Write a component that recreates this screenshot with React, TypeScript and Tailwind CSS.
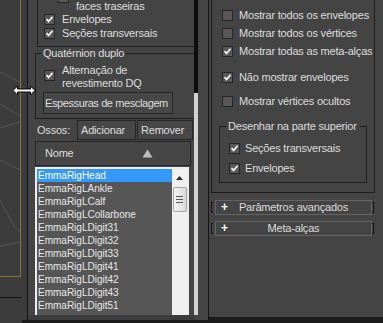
import React from "react";

const Check = ({ on }: { on?: boolean }) => (
  <span className="w-[11px] h-[11px] shrink-0 border border-[#262626] bg-[#585858] flex items-center justify-center">
    {on && (
      <svg width="9" height="9" viewBox="0 0 9 9">
        <path d="M1.5 4.2 L3.6 6.4 L7.6 1.8" stroke="#f4f4f4" strokeWidth="1.7" fill="none" />
      </svg>
    )}
  </span>
);

const bones = [
  "EmmaRigHead",
  "EmmaRigLAnkle",
  "EmmaRigLCalf",
  "EmmaRigLCollarbone",
  "EmmaRigLDigit31",
  "EmmaRigLDigit32",
  "EmmaRigLDigit33",
  "EmmaRigLDigit41",
  "EmmaRigLDigit42",
  "EmmaRigLDigit43",
  "EmmaRigLDigit51",
];

const Rollout = ({ label }: { label: string }) => (
  <div className="flex items-center ml-[2px] h-[15px]">
    <span className="w-[2px] h-[11px] border-l border-t border-b border-[#161616]" />
    <div className="ml-[2px] w-[157px] h-[15px] border border-[#646464] flex items-center">
      <span className="w-[14px] pl-[5px] text-white font-bold text-[12px] leading-[13px]">+</span>
      <span className="flex-1 text-center leading-[13px]">{label}</span>
      <span className="w-[14px]" />
    </div>
    <span className="w-[2px] h-[11px] border-r border-t border-b border-[#161616]" />
  </div>
);

export default function App() {
  return (
    <div className="w-[383px] h-[323px] overflow-hidden flex bg-[#1b1b1b] relative font-['Liberation_Sans',Arial,sans-serif] text-[11px] tracking-[-0.2px] text-[#dedede]">
      {/* viewport edge */}
      <div className="w-[22px] h-full bg-[#3c3c3c] flex flex-col">
        <div className="w-[21px] h-[277px] border-r border-b border-[#8a7432] relative overflow-hidden">
          <svg width="21" height="277" className="absolute left-0 top-0">
            <g stroke="#545454" strokeWidth="1" fill="none">
              <path d="M0 72 L20 82" />
              <path d="M0 104 L20 116" />
              <path d="M0 128 L20 122" />
              <path d="M0 160 L20 170" />
              <path d="M0 200 L14 226 L20 232" />
              <path d="M0 246 L20 242" />
            </g>
          </svg>
        </div>
        <div className="h-[20px]" />
        <div className="h-px bg-[#121212]" />
      </div>

      <div className="flex-1 flex flex-col">
        <div className="h-[320px] flex bg-[#444444]">
          <div className="w-[5px] bg-[#3c3c3c]" />

          {/* left rollout */}
          <div className="w-[167px] border-l border-[#141414] overflow-hidden flex flex-col">
            <div className="ml-[9px] h-[47px] shrink-0 border-l border-b border-[#1e1e1e] flex flex-col pl-[6px]">
              <div className="flex items-start pl-[14px] -mt-[13px] h-[25px]">
                <span className="mt-[5px]">
                  <Check />
                </span>
                <span className="ml-[7px] leading-[13px] whitespace-nowrap">
                  Mostrar somente
                  <br />
                  faces traseiras
                </span>
              </div>
              <div className="flex items-center h-[14px]">
                <Check on />
                <span className="ml-[7px] whitespace-nowrap">Envelopes</span>
              </div>
              <div className="flex items-center h-[14px]">
                <Check on />
                <span className="ml-[7px] whitespace-nowrap">Seções transversais</span>
              </div>
            </div>

            <fieldset className="ml-[7px] shrink-0 border border-r-0 border-[#1e1e1e] min-w-0">
              <legend className="ml-[5px] px-[2px] leading-[13px]">Quatérnion duplo</legend>
              <div className="pt-[4px] pl-[8px] flex items-start">
                <span className="mt-[6px]">
                  <Check on />
                </span>
                <span className="ml-[7px] leading-[13px]">
                  Alternação de
                  <br />
                  revestimento DQ
                </span>
              </div>
              <div className="mt-[2px] mb-[4px] ml-[7px] w-[130px] h-[22px] border border-[#262626] bg-[#474747] flex items-center pl-[1px] whitespace-nowrap tracking-[-0.4px]">
                Espessuras de mesclagem
              </div>
            </fieldset>

            <div className="flex items-center h-[20px] mt-[1px] pl-[9px] shrink-0">
              <span className="w-[40px] whitespace-nowrap">Ossos:</span>
              <div className="w-[59px] h-[20px] border border-[#262626] bg-[#474747] flex items-center pl-[3px]">Adicionar</div>
              <div className="ml-[1px] w-[56px] h-[20px] border border-[#262626] bg-[#474747] flex items-center pl-[3px]">Remover</div>
            </div>

            <div className="ml-[7px] mt-[1px] w-[156px] h-[25px] shrink-0 border border-[#262626] bg-[#464646] flex items-center pl-[9px]">
              <span className="flex-1">Nome</span>
              <svg width="11" height="9" viewBox="0 0 11 9" className="mr-[37px]">
                <path d="M5.5 0.5 L10.5 8.5 L0.5 8.5 Z" fill="#bdbdbd" />
              </svg>
            </div>

            <div className="ml-[7px] mt-[1px] w-[154px] flex-1 border-l-2 border-t-2 border-r-2 border-[#ececec] bg-[#565656] flex overflow-hidden">
              <div className="w-[135px] flex flex-col text-[10px] tracking-normal">
                {bones.map((b, i) => (
                  <div
                    key={b}
                    className={
                      i === 0
                        ? "h-[13px] leading-[13px] pl-[1px] bg-[#3399ff] text-white whitespace-nowrap"
                        : "h-[13px] leading-[13px] pl-[1px] text-[#e8e8e8] whitespace-nowrap"
                    }
                  >
                    {b}
                  </div>
                ))}
              </div>
              <div className="w-[15px] bg-[#f0f0f0] flex flex-col items-center">
                <svg width="7" height="4" viewBox="0 0 7 4" className="mt-[7px]">
                  <path d="M3.5 0 L7 4 L0 4 Z" fill="#2a2a2a" />
                </svg>
                <div className="mt-[7px] w-[14px] h-[25px] border border-[#a5a5a5] rounded-[2px] bg-gradient-to-r from-[#f4f4f4] to-[#d9d9d9] flex flex-col items-center justify-center gap-[2px]">
                  <span className="w-[7px] h-px bg-[#5a5a5a]" />
                  <span className="w-[7px] h-px bg-[#5a5a5a]" />
                  <span className="w-[7px] h-px bg-[#5a5a5a]" />
                </div>
              </div>
            </div>
            <div className="h-[5px] bg-[#3c3c3c] shrink-0" />
          </div>

          {/* rollout scrollbar */}
          <div className="w-[4px] flex flex-col">
            <div className="h-[93px] bg-[#0e0e0e]" />
            <div className="h-[222px] bg-[#d2d2d2]" />
          </div>
          <div className="w-[10px]" />

          {/* right rollout */}
          <div className="w-[175px] border-l border-[#141414] border-b-[3px] border-b-[#1b1b1b] flex flex-col">
            <div className="ml-[2px] w-[164px] h-[193px] shrink-0 border-l border-r border-b border-[#1e1e1e] overflow-hidden flex flex-col">
              <div className="mt-[6px] h-[18px] flex items-center pl-[10px] whitespace-nowrap">
                <Check />
                <span className="ml-[6px]">Mostrar todos os envelopes</span>
              </div>
              <div className="h-[18px] flex items-center pl-[10px] whitespace-nowrap">
                <Check />
                <span className="ml-[6px]">Mostrar todos os vértices</span>
              </div>
              <div className="h-[18px] flex items-center pl-[10px] whitespace-nowrap">
                <Check on />
                <span className="ml-[6px]">Mostrar todas as meta-alças</span>
              </div>
              <div className="mt-[8px] h-[18px] flex items-center pl-[10px] whitespace-nowrap">
                <Check on />
                <span className="ml-[6px]">Não mostrar envelopes</span>
              </div>
              <div className="mt-[6px] h-[18px] flex items-center pl-[10px] whitespace-nowrap">
                <Check />
                <span className="ml-[6px]">Mostrar vértices ocultos</span>
              </div>
              <fieldset className="mt-[10px] ml-[7px] w-[148px] border border-[#1e1e1e] min-w-0">
                <legend className="ml-[6px] px-[2px] leading-[13px] w-[134px] overflow-hidden whitespace-nowrap">
                  Desenhar na parte superior
                </legend>
                <div className="pt-[5px] pb-[4px] pl-[9px]">
                  <div className="h-[20px] flex items-center">
                    <Check on />
                    <span className="ml-[5px]">Seções transversais</span>
                  </div>
                  <div className="h-[20px] flex items-center">
                    <Check on />
                    <span className="ml-[5px]">Envelopes</span>
                  </div>
                </div>
              </fieldset>
            </div>
            <div className="mt-[7px]">
              <Rollout label="Parâmetros avançados" />
            </div>
            <div className="mt-[6px]">
              <Rollout label="Meta-alças" />
            </div>
          </div>
        </div>
        <div className="h-[3px] bg-[#1b1b1b]" />
      </div>

      {/* resize cursor */}
      <svg width="24" height="11" viewBox="0 0 24 11" className="absolute left-[12px] top-[85px]">
        <path
          d="M1 5.5 L5.5 1 L5.5 4 L18.5 4 L18.5 1 L23 5.5 L18.5 10 L18.5 7 L5.5 7 L5.5 10 Z"
          fill="#ffffff"
          stroke="#000000"
          strokeWidth="1"
        />
      </svg>
    </div>
  );
}
